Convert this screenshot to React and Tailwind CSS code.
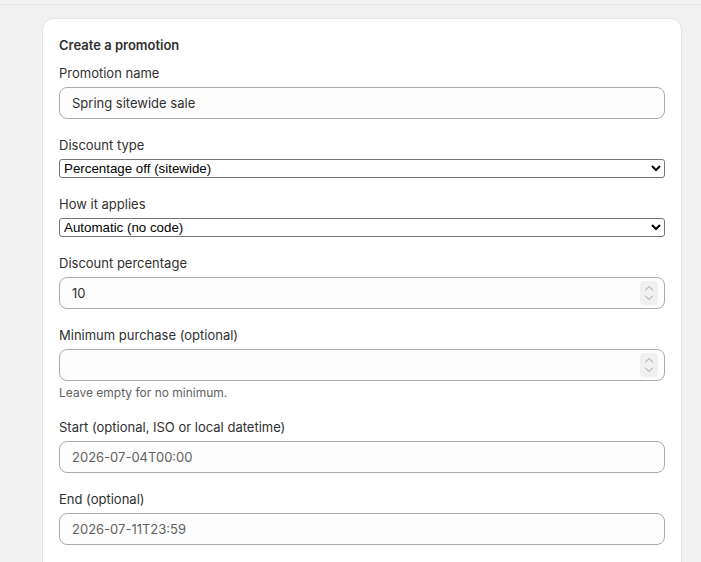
import React, { useState } from "react";

const Field = ({ label, children, help }) => (
  <div className="flex flex-col gap-1">
    <label className="text-[13px] leading-5 text-[#303030]">{label}</label>
    {children}
    {help && <p className="text-xs leading-4 text-[#616161]">{help}</p>}
  </div>
);

const inputCls =
  "w-full h-8 px-3 text-[13px] text-[#303030] placeholder:text-[#616161] bg-[#fdfdfd] border border-[#ababab] rounded-lg outline-none";

const numberCls =
  inputCls +
  " [appearance:textfield] [&::-webkit-inner-spin-button]:appearance-none [&::-webkit-outer-spin-button]:appearance-none";

const selectCls =
  "w-full h-[19px] text-[13.33px] font-['Liberation_Sans',Arial,sans-serif] text-black bg-white border border-[#767676] rounded-[3px]";

// drawn spinner, like the browser's number stepper
const Stepper = () => (
  <div className="absolute right-[7px] top-1/2 -translate-y-1/2 w-[18px] h-[24px] rounded-[4px] bg-[#f0f0f0] flex flex-col items-center justify-center gap-[4px]">
    <svg width="10" height="6" viewBox="0 0 10 6" fill="none">
      <path d="M1.5 5l3.5-3.5 3.5 3.5" stroke="#9a9a9a" strokeWidth="1" strokeLinecap="round" strokeLinejoin="round" />
    </svg>
    <svg width="10" height="6" viewBox="0 0 10 6" fill="none">
      <path d="M1.5 1l3.5 3.5 3.5-3.5" stroke="#9a9a9a" strokeWidth="1" strokeLinecap="round" strokeLinejoin="round" />
    </svg>
  </div>
);

export default function App() {
  const [name, setName] = useState("Spring sitewide sale");
  const [type, setType] = useState("percent");
  const [applies, setApplies] = useState("auto");
  const [pct, setPct] = useState("10");
  const [min, setMin] = useState("");
  const [start, setStart] = useState("");
  const [end, setEnd] = useState("");

  return (
    <div className="min-h-screen bg-[#f1f1f1] font-['Inter',sans-serif]">
      <div className="h-[5px] bg-[#f3f3f3] border-b border-[#e8e8e8]" />
      <div className="pl-[42px] pr-[19px] pt-[13px]">
        <div className="bg-white rounded-xl border border-[#e3e3e3] p-4 pb-10 flex flex-col">
          <h2 className="text-[13px] leading-5 font-semibold text-[#303030] mb-2">
            Create a promotion
          </h2>
          <div className="flex flex-col gap-4">
            <Field label="Promotion name">
              <input className={inputCls} value={name} onChange={e => setName(e.target.value)} />
            </Field>
            <Field label="Discount type">
              <select className={selectCls} value={type} onChange={e => setType(e.target.value)}>
                <option value="percent">Percentage off (sitewide)</option>
                <option value="fixed">Fixed amount off</option>
              </select>
            </Field>
            <Field label="How it applies">
              <select className={selectCls} value={applies} onChange={e => setApplies(e.target.value)}>
                <option value="auto">Automatic (no code)</option>
                <option value="code">Discount code</option>
              </select>
            </Field>
            <Field label="Discount percentage">
              <div className="relative">
                <input type="number" className={numberCls} value={pct} onChange={e => setPct(e.target.value)} />
                <Stepper />
              </div>
            </Field>
            <Field label="Minimum purchase (optional)" help="Leave empty for no minimum.">
              <div className="relative">
                <input type="number" className={numberCls} value={min} onChange={e => setMin(e.target.value)} />
                <Stepper />
              </div>
            </Field>
            <Field label="Start (optional, ISO or local datetime)">
              <input
                className={inputCls}
                placeholder="2026-07-04T00:00"
                value={start}
                onChange={e => setStart(e.target.value)}
              />
            </Field>
            <Field label="End (optional)">
              <input
                className={inputCls}
                placeholder="2026-07-11T23:59"
                value={end}
                onChange={e => setEnd(e.target.value)}
              />
            </Field>
          </div>
        </div>
      </div>
    </div>
  );
}
